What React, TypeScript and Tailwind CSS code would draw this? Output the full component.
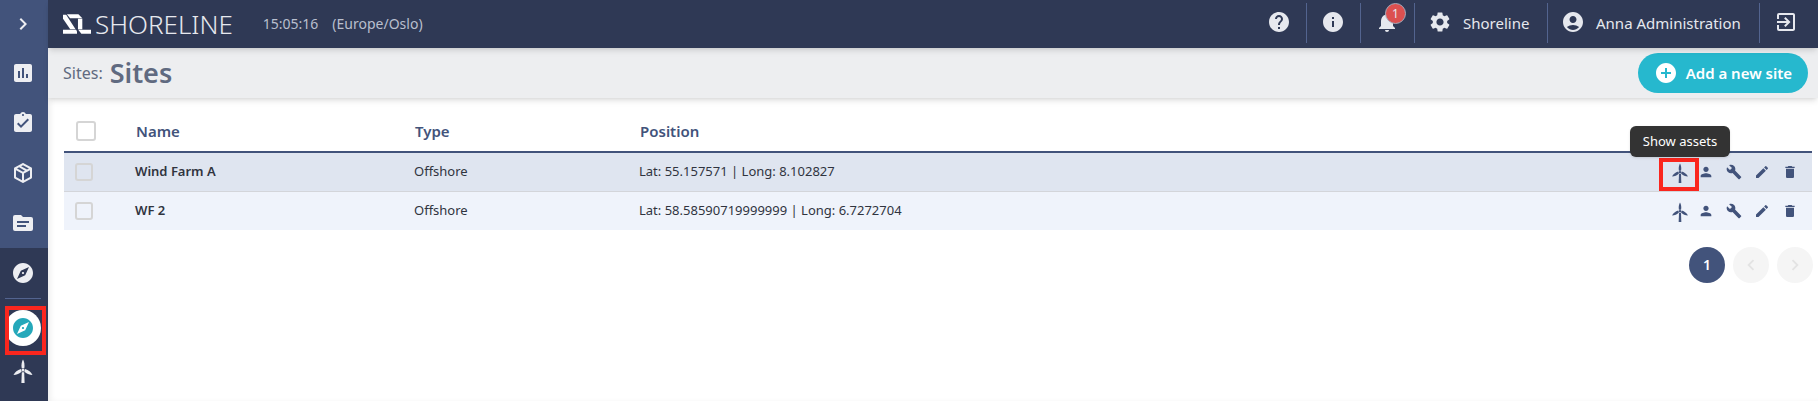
import { useState } from 'react'
import type { ReactNode } from 'react'
import {
  MdAccountCircle,
  MdAddCircle,
  MdAssessment,
  MdAssignmentTurnedIn,
  MdBuild,
  MdChevronLeft,
  MdChevronRight,
  MdDelete,
  MdEdit,
  MdExitToApp,
  MdExplore,
  MdHelp,
  MdInfo,
  MdNotifications,
  MdPerson,
  MdSettings,
} from 'react-icons/md'

interface Site {
  id: number
  name: string
  type: string
  lat: string
  long: string
}

const sites: Site[] = [
  { id: 1, name: 'Wind Farm A', type: 'Offshore', lat: '55.157571', long: '8.102827' },
  { id: 2, name: 'WF 2', type: 'Offshore', lat: '58.58590719999999', long: '6.7272704' },
]

function PackageIcon() {
  return (
    <svg viewBox="0 0 24 24" className="size-6" fill="currentColor">
      <path d="M21,16.5C21,16.88 20.79,17.21 20.47,17.38L12.57,21.82C12.41,21.94 12.21,22 12,22C11.79,22 11.59,21.94 11.43,21.82L3.53,17.38C3.21,17.21 3,16.88 3,16.5V7.5C3,7.12 3.21,6.79 3.53,6.62L11.43,2.18C11.59,2.06 11.79,2 12,2C12.21,2 12.41,2.06 12.57,2.18L20.47,6.62C20.79,6.79 21,7.12 21,7.5V16.5M12,4.15L10.11,5.22L16,8.61L17.96,7.5L12,4.15M6.04,7.5L12,10.85L13.96,9.75L8.08,6.35L6.04,7.5M5,15.91L11,19.29V12.58L5,9.21V15.91M19,15.91V9.21L13,12.58V19.29L19,15.91Z" />
    </svg>
  )
}

function FolderIcon() {
  return (
    <svg viewBox="0 0 24 24" className="size-6" fill="currentColor">
      <path
        fillRule="evenodd"
        d="M20 6h-8l-2-2H4a2 2 0 0 0-2 2v12a2 2 0 0 0 2 2h16a2 2 0 0 0 2-2V8a2 2 0 0 0-2-2zM6 10h12v2H6zM6 14h9v2H6z"
      />
    </svg>
  )
}

function TurbineIcon({ className }: { className: string }) {
  return (
    <svg viewBox="0 0 24 24" className={className} fill="currentColor">
      <path d="M12 0.5C13.3 2.5 13.9 6 13.3 9.2h-2.6C10.100 6 10.700 2.500 12 0.500z" />
      <path d="M13.300 12.500l.9-2.400c3.200 1 6 3 7.300 6-3-.1-6.200-1.400-8.200-3.600z" />
      <path d="M10.700 12.500l-.9-2.400c-3.200 1-6 3-7.300 6 3-.1 6.200-1.400 8.200-3.600z" />
      <circle cx="12" cy="11" r="1.500" />
      <path d="M10.800 13.300h2.400l.4 10.700h-3.200z" />
    </svg>
  )
}

function Logo() {
  return (
    <div className="flex items-center gap-1" aria-label="Shoreline">
      <svg viewBox="0 0 29 20" className="h-5 w-7" fill="#fff">
        <path d="M4 0h12l4 4H7.300z" />
        <path d="M3.300 0.500L13 15.500H7.500L0 4.500V0.500z" />
        <path d="M0 16h13.500l1 1.500V20H0z" />
        <path d="M15.500 4.500H20v11h-4.500z" />
        <path d="M15.800 16H29v4H19z" />
      </svg>
      <span className="text-[26px] leading-8 font-light">SHORELINE</span>
    </div>
  )
}

function SideLink({ label, children }: { label: string; children: ReactNode }) {
  return (
    <a href="#" aria-label={label} className="flex h-[50px] w-full items-center justify-center pr-0.5">
      {children}
    </a>
  )
}

function Sidebar() {
  return (
    <nav className="flex w-12 shrink-0 flex-col bg-[#42537b] text-[#edeef2]">
      <button aria-label="Expand menu" className="flex h-12 items-center justify-center pr-0.5">
        <MdChevronRight size={24} />
      </button>
      <SideLink label="Dashboard"><MdAssessment size={24} /></SideLink>
      <SideLink label="Tasks"><MdAssignmentTurnedIn size={24} /></SideLink>
      <SideLink label="Packages"><PackageIcon /></SideLink>
      <SideLink label="Files"><FolderIcon /></SideLink>
      <div className="flex grow flex-col items-center bg-[#2f3955]">
        <SideLink label="Explore"><MdExplore size={24} /></SideLink>
        <div className="mr-0.5 h-px w-9 bg-[#53648f]" />
        <a
          href="#"
          aria-label="Sites"
          className="relative mt-[11px] mr-0.5 flex size-9 items-center justify-center rounded-full bg-white text-[#25a8ba]"
        >
          <MdExplore size={24} />
          <span className="absolute -top-1 -right-[5px] -bottom-[9px] left-0 border-4 border-[#fa261e]" />
        </a>
        <SideLink label="Assets"><TurbineIcon className="size-6" /></SideLink>
      </div>
    </nav>
  )
}

function Topbar() {
  return (
    <header className="relative z-10 flex h-12 items-center bg-[#2f3955] pl-[15px] text-[#e6e8ee] shadow-md">
      <Logo />
      <span className="ml-[30px] text-sm text-[#b9bfce]">15:05:16</span>
      <span className="ml-[14px] text-sm text-[#b9bfce]">(Europe/Oslo)</span>
      <div className="ml-auto flex h-10 items-center divide-x divide-[#53648f] self-start pt-[6px]">
        <button aria-label="Help" className="flex h-10 w-[54px] items-center justify-center pr-0.5 pb-0.5"><MdHelp size={24} /></button>
        <button aria-label="Information" className="flex h-10 w-[54px] items-center justify-center pr-0.5 pb-0.5"><MdInfo size={24} /></button>
        <button aria-label="Notifications" className="relative flex h-10 w-[54px] items-center justify-center pr-0.5 pb-0.5">
          <MdNotifications size={24} />
          <span className="absolute top-0 right-2 flex size-[21px] items-center justify-center rounded-full border border-[#a5abbb] bg-[#dc5050] text-xs">
            1
          </span>
        </button>
        <button className="flex h-10 w-[133px] items-center gap-[11px] pl-[13px] text-[15px]">
          <MdSettings size={24} className="mb-0.5" />
          Shoreline
        </button>
        <button className="flex h-10 w-[212px] items-center gap-[11px] pl-[13px] text-[15px]">
          <MdAccountCircle size={24} className="mb-0.5" />
          Anna Administration
        </button>
        <button aria-label="Log out" className="flex h-10 w-[58px] items-center pb-0.5 pl-[14px]"><MdExitToApp size={24} /></button>
      </div>
    </header>
  )
}

function Checkbox({ label, className }: { label: string; className: string }) {
  return (
    <input
      type="checkbox"
      aria-label={label}
      className={`block appearance-none rounded-[3px] border-2 border-[#d5d5d5] ${className}`}
    />
  )
}

function RowActions({ highlighted }: { highlighted: boolean }) {
  return (
    <div className="flex items-center justify-end gap-3 pr-[14px] text-[#42537b]">
      <button aria-label="Show assets" className="relative -mr-1 pt-0.5">
        <TurbineIcon className="size-5" />
        {highlighted && (
          <>
            <span className="absolute -right-[9px] -left-[11px] -top-[3px] h-[33px] border-4 border-[#fa261e]" />
            <span
              role="tooltip"
              className="absolute bottom-[26px] left-1/2 flex h-[31px] w-[100px] -translate-x-1/2 items-center justify-center rounded-md bg-[#333] text-[13px] text-white shadow"
            >
              Show assets
            </span>
          </>
        )}
      </button>
      <button aria-label="Users"><MdPerson size={16} /></button>
      <button aria-label="Maintenance"><MdBuild size={16} /></button>
      <button aria-label="Edit"><MdEdit size={16} /></button>
      <button aria-label="Delete"><MdDelete size={16} /></button>
    </div>
  )
}

function SitesTable() {
  return (
    <table className="w-full table-fixed border-collapse text-left text-[13px] text-[#30343f]">
      <thead>
        <tr className="h-[41px] border-b-2 border-[#42537b] text-[15px] text-[#42537b]">
          <th className="w-[71px] pl-3"><Checkbox label="Select all sites" className="size-5" /></th>
          <th className="w-[279px] pl-px font-semibold">Name</th>
          <th className="w-[225px] pl-px font-semibold">Type</th>
          <th className="pl-px font-semibold">Position</th>
          <th className="w-44" aria-label="Actions" />
        </tr>
      </thead>
      <tbody>
        {sites.map((site, index) => (
          <tr
            key={site.id}
            className={`h-[39px] ${index === 0 ? 'border-b border-[#d3d5da] bg-[#dfe5f0]' : 'bg-[#eff3fb]'}`}
          >
            <td className="pl-[11px]"><Checkbox label={`Select ${site.name}`} className="size-[18px]" /></td>
            <td className="font-semibold">{site.name}</td>
            <td>{site.type}</td>
            <td>Lat: {site.lat} | Long: {site.long}</td>
            <td><RowActions highlighted={index === 0} /></td>
          </tr>
        ))}
      </tbody>
    </table>
  )
}

function Pagination() {
  const [page, setPage] = useState(1)

  return (
    <div className="-mr-px mt-[17px] flex justify-end gap-2">
      <button
        onClick={() => setPage(1)}
        className="size-9 rounded-full bg-[#42537b] text-sm font-semibold text-white"
      >
        {page}
      </button>
      <button disabled aria-label="Previous page" className="flex size-9 items-center justify-center rounded-full bg-[#f5f5f5] text-[#e3e3e3]">
        <MdChevronLeft size={22} />
      </button>
      <button disabled aria-label="Next page" className="flex size-9 items-center justify-center rounded-full bg-[#f5f5f5] text-[#e3e3e3]">
        <MdChevronRight size={22} />
      </button>
    </div>
  )
}

export default function App() {
  return (
    <div className="flex min-h-screen bg-white font-['Noto_Sans',sans-serif]">
      <Sidebar />
      <div className="flex min-w-0 grow flex-col shadow-[inset_4px_0_6px_-2px_rgba(0,0,0,0.08)]">
        <Topbar />
        <div className="flex h-[50px] items-center bg-[#edeef0] pr-2.5 pl-[15px] text-[#606a80] shadow-md">
          <span className="text-base">Sites:</span>
          <h1 className="ml-[7px] text-[27px] font-semibold">Sites</h1>
          <button className="ml-auto flex h-10 items-center gap-2 rounded-full bg-[#26b8ce] px-4 text-[15px] font-semibold text-white">
            <MdAddCircle size={24} />
            Add a new site
          </button>
        </div>
        <main className="pt-[13px] pr-1.5 pl-4">
          <SitesTable />
          <Pagination />
        </main>
      </div>
    </div>
  )
}
